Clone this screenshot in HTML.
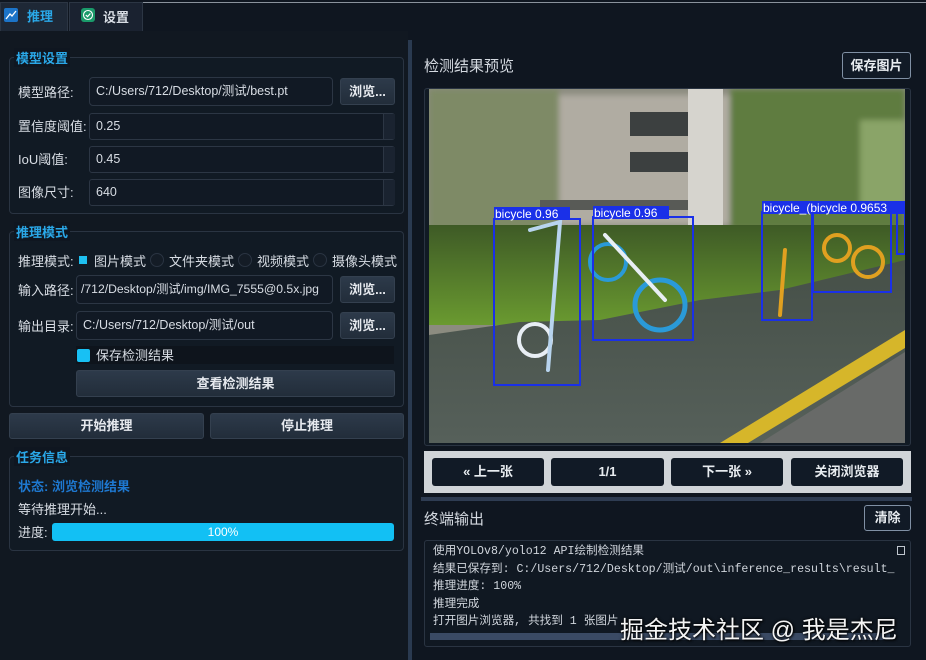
<!DOCTYPE html>
<html><head><meta charset="utf-8"><style>
*{box-sizing:border-box;margin:0;padding:0}
body{width:926px;height:660px;background:#0f1620;font-family:"Liberation Sans","Noto Sans CJK SC",sans-serif;color:#d8dde4;font-size:13px;position:relative;overflow:hidden}
.a{position:absolute}
.grp{position:absolute;border:1px solid #2a3442;border-radius:4px;background:#111a24}
.gt{position:absolute;color:#2aa8e8;font-weight:bold;font-size:13px;background:#0f1620;padding:0 2px}
.lbl{position:absolute;font-size:13px;color:#d8dde4;line-height:15px}
.inp{position:absolute;background:#111924;border:1px solid #2c3644;border-radius:3px;padding-left:6px;line-height:27px;font-size:12.5px;color:#d8dde4;white-space:nowrap;overflow:hidden}
.btn{position:absolute;background:linear-gradient(#2d3a4a,#222d3a);border:1px solid #34404f;border-radius:3px;text-align:center;font-weight:bold;color:#e6e9ee;font-size:13px}
.spin{position:absolute;width:12px;border-left:1px solid #2c3644}
.nb{position:absolute;top:458px;height:28px;background:#111a26;border-radius:3px;color:#e8ecf0;font-weight:bold;text-align:center;line-height:28px;font-size:13px}
.mono{font-family:"Liberation Mono","Noto Sans CJK SC",monospace;font-size:11.6px;line-height:17.5px;color:#d0d5dc}
</style></head><body>
<div class="a" style="left:0;top:0;width:926px;height:31px;background:#0f1620"></div>
<div class="a" style="left:142px;top:2px;width:784px;height:1px;background:#8a929c"></div>
<div class="a" style="left:0;top:2px;width:68px;height:29px;background:#1e2836;border:1px solid #2c3644;border-bottom:none"></div>
<div class="a" style="left:4px;top:8px;width:14px;height:14px;background:#1c74c8;border-radius:2px"></div>
<svg class="a" style="left:4px;top:8px" width="14" height="14"><path d="M2 11 L6 6 L8 8 L12 3" stroke="#fff" stroke-width="1.3" fill="none"/></svg>
<div class="lbl" style="left:27px;top:9px;color:#2aa8e8;font-weight:bold">推理</div>
<div class="a" style="left:69px;top:2px;width:74px;height:29px;background:#1a2230;border:1px solid #2c3644;border-bottom:none"></div>
<div class="a" style="left:81px;top:8px;width:14px;height:14px;background:#1a9a6a;border-radius:3px"></div>
<svg class="a" style="left:81px;top:8px" width="14" height="14"><circle cx="7" cy="7" r="4.5" stroke="#fff" stroke-width="1.1" fill="none"/><path d="M4.8 7 L6.5 8.6 L9.4 5.5" stroke="#fff" stroke-width="1.2" fill="none"/></svg>
<div class="lbl" style="left:103px;top:10px;font-weight:bold">设置</div>

<div class="a" style="left:0;top:31px;width:408px;height:629px;background:#111821"></div>
<div class="a" style="left:408px;top:40px;width:4px;height:620px;background:#2a3a50"></div>

<div class="grp" style="left:9px;top:57px;width:395px;height:157px"></div>
<div class="gt" style="left:14px;top:48px">模型设置</div>
<div class="lbl" style="left:18px;top:85px">模型路径:</div>
<div class="inp" style="left:89px;top:77px;width:244px;height:29px;border-radius:4px">C:/Users/712/Desktop/测试/best.pt</div>
<div class="btn" style="left:340px;top:78px;width:55px;height:27px;line-height:25px">浏览...</div>
<div class="lbl" style="left:18px;top:119px">置信度阈值:</div>
<div class="inp" style="left:89px;top:113px;width:306px;height:27px;line-height:25px">0.25</div>
<div class="spin" style="left:383px;top:114px;height:25px;background:#1a2330"></div>
<div class="lbl" style="left:18px;top:152px">IoU阈值:</div>
<div class="inp" style="left:89px;top:146px;width:306px;height:27px;line-height:25px">0.45</div>
<div class="spin" style="left:383px;top:147px;height:25px;background:#1a2330"></div>
<div class="lbl" style="left:18px;top:185px">图像尺寸:</div>
<div class="inp" style="left:89px;top:179px;width:306px;height:27px;line-height:25px">640</div>
<div class="spin" style="left:383px;top:180px;height:25px;background:#1a2330"></div>

<div class="grp" style="left:9px;top:231px;width:395px;height:176px"></div>
<div class="gt" style="left:14px;top:222px">推理模式</div>
<div class="lbl" style="left:18px;top:254px">推理模式:</div>
<div class="a" style="left:79px;top:256px;width:8px;height:8px;background:#1ec0f0"></div>
<div class="lbl" style="left:94px;top:254px">图片模式</div>
<div class="a" style="left:150px;top:253px;width:14px;height:14px;border-radius:50%;border:1px solid #2a3442;background:#141c26"></div>
<div class="lbl" style="left:169px;top:254px">文件夹模式</div>
<div class="a" style="left:238px;top:253px;width:14px;height:14px;border-radius:50%;border:1px solid #2a3442;background:#141c26"></div>
<div class="lbl" style="left:257px;top:254px">视频模式</div>
<div class="a" style="left:313px;top:253px;width:14px;height:14px;border-radius:50%;border:1px solid #2a3442;background:#141c26"></div>
<div class="lbl" style="left:332px;top:254px">摄像头模式</div>
<div class="lbl" style="left:18px;top:283px">输入路径:</div>
<div class="inp" style="left:76px;top:275px;width:257px;height:29px;border-radius:4px;padding-left:4px;font-size:12.2px">/712/Desktop/测试/img/IMG_7555@0.5x.jpg</div>
<div class="btn" style="left:340px;top:276px;width:55px;height:27px;line-height:25px">浏览...</div>
<div class="lbl" style="left:18px;top:319px">输出目录:</div>
<div class="inp" style="left:76px;top:311px;width:257px;height:29px;border-radius:4px">C:/Users/712/Desktop/测试/out</div>
<div class="btn" style="left:340px;top:312px;width:55px;height:27px;line-height:25px">浏览...</div>
<div class="a" style="left:76px;top:346px;width:318px;height:18px;background:#0e141c"></div>
<div class="a" style="left:77px;top:349px;width:13px;height:13px;background:#18c0f4;border-radius:2px"></div>
<div class="lbl" style="left:96px;top:348px">保存检测结果</div>
<div class="btn" style="left:76px;top:370px;width:319px;height:27px;line-height:25px">查看检测结果</div>

<div class="btn" style="left:9px;top:413px;width:195px;height:26px;line-height:24px">开始推理</div>
<div class="btn" style="left:210px;top:413px;width:194px;height:26px;line-height:24px">停止推理</div>

<div class="grp" style="left:9px;top:456px;width:395px;height:95px"></div>
<div class="gt" style="left:14px;top:447px">任务信息</div>
<div class="lbl" style="left:18px;top:479px;color:#1e78d0;font-weight:bold">状态: 浏览检测结果</div>
<div class="lbl" style="left:18px;top:502px">等待推理开始...</div>
<div class="lbl" style="left:18px;top:525px">进度:</div>
<div class="a" style="left:52px;top:523px;width:342px;height:18px;background:#12c0f4;border-radius:3px;text-align:center;color:#fff;font-size:12px;line-height:18px">100%</div>

<div class="lbl" style="left:424px;top:58px;font-size:15px;line-height:18px;color:#d4d9e0">检测结果预览</div>
<div class="a" style="left:842px;top:52px;width:69px;height:27px;border:1px solid #8090a4;border-radius:3px;background:#111a26;color:#e8ecf0;font-weight:bold;text-align:center;line-height:25px">保存图片</div>
<div class="a" style="left:424px;top:88px;width:487px;height:358px;border:1px solid #2a3442;border-radius:3px;background:#111a24"></div>
<svg class="a" style="left:429px;top:89px" width="476" height="354" viewBox="429 89 476 354">
<defs>
<linearGradient id="pave" x1="0" y1="0" x2="0" y2="1"><stop offset="0" stop-color="#465048"/><stop offset="1" stop-color="#56605a"/></linearGradient>
<linearGradient id="grass" x1="0" y1="0" x2="0" y2="1"><stop offset="0" stop-color="#3e5a26"/><stop offset="1" stop-color="#6a9a30"/></linearGradient>
<filter id="bl"><feGaussianBlur stdDeviation="3"/></filter>
</defs>
<rect x="429" y="89" width="476" height="354" fill="#8c8c80"/>
<g filter="url(#bl)">
<rect x="540" y="95" width="190" height="130" fill="#b0aca2"/>
<rect x="429" y="89" width="130" height="150" fill="#7e8a66"/>
<rect x="730" y="89" width="175" height="140" fill="#5e7c40"/>
<rect x="860" y="120" width="45" height="90" fill="#8aa468"/>
</g>
<rect x="630" y="112" width="62" height="24" fill="#3c4040"/>
<rect x="630" y="152" width="62" height="20" fill="#3c4040"/>
<rect x="540" y="200" width="180" height="10" fill="#585a56"/>
<rect x="688" y="89" width="35" height="145" fill="#d6d4ce"/>
<rect x="429" y="225" width="476" height="100" fill="url(#grass)"/>
<polygon points="429,335 520,322 600,320 700,300 780,290 905,260 905,443 429,443" fill="url(#pave)"/>
<polygon points="720,443 905,330 905,348 748,443" fill="#d6b62a"/>
<polygon points="760,443 905,352 905,443" fill="#686a68"/>
<g fill="none" stroke-linecap="round">
<circle cx="535" cy="340" r="16" stroke="#e8eef4" stroke-width="4"/>
<path d="M530 230 L560 222 L548 370" stroke="#b8d4ee" stroke-width="4"/>
<circle cx="608" cy="262" r="18" stroke="#2a9ad8" stroke-width="4"/>
<circle cx="660" cy="305" r="25" stroke="#2a9ad8" stroke-width="5"/>
<path d="M605 235 L665 300" stroke="#e8eef4" stroke-width="4"/>
<circle cx="837" cy="248" r="13" stroke="#e0a020" stroke-width="4"/>
<circle cx="868" cy="262" r="15" stroke="#e0a020" stroke-width="4"/>
<path d="M785 250 L780 315" stroke="#e0a020" stroke-width="4"/>
</g>
<g fill="none" stroke="#1a30e8" stroke-width="2">
<rect x="494" y="219" width="86" height="166"/>
<rect x="593" y="217" width="100" height="123"/>
<rect x="762" y="212" width="50" height="108"/>
<rect x="813" y="212" width="78" height="80"/>
<rect x="897" y="212" width="8" height="42"/>
</g>
<g fill="#1a30e8"><rect x="494" y="207" width="76" height="13"/><rect x="593" y="206" width="76" height="13"/><rect x="762" y="201" width="143" height="13"/></g>
<g fill="#fff" font-family="Liberation Sans,sans-serif" font-size="12"><text x="495" y="218">bicycle 0.96</text><text x="594" y="217">bicycle 0.96</text><text x="763" y="212">bicycle_(bicycle 0.9653</text></g>
</svg>
<div class="a" style="left:424px;top:451px;width:487px;height:42px;background:#d0d4d8"></div>
<div class="nb" style="left:432px;width:112px">« 上一张</div>
<div class="nb" style="left:551px;width:113px">1/1</div>
<div class="nb" style="left:671px;width:112px">下一张 »</div>
<div class="nb" style="left:791px;width:112px">关闭浏览器</div>
<div class="a" style="left:421px;top:497px;width:491px;height:4px;background:#2e3c52"></div>
<div class="lbl" style="left:424px;top:511px;font-size:15px;line-height:18px;color:#d4d9e0">终端输出</div>
<div class="a" style="left:864px;top:505px;width:47px;height:26px;border:1px solid #8090a4;border-radius:3px;background:#111a26;color:#e8ecf0;font-weight:bold;text-align:center;line-height:24px">清除</div>
<div class="a" style="left:424px;top:540px;width:487px;height:107px;border:1px solid #2a3442;border-radius:3px;background:#101822"></div>
<div class="a mono" style="left:433px;top:543px;width:462px;white-space:pre;overflow:hidden">使用YOLOv8/yolo12 API绘制检测结果
结果已保存到: C:/Users/712/Desktop/测试/out\inference_results\result_1
推理进度: 100%
推理完成
打开图片浏览器, 共找到 1 张图片</div>
<div class="a" style="left:897px;top:546px;width:8px;height:9px;border:1px solid #c0c6ce"></div>
<div class="a" style="left:430px;top:633px;width:460px;height:7px;background:#3a4a64"></div>
<div class="a" style="left:620px;top:610px;font-size:24px;color:#f4f4f4;text-shadow:0 0 3px #000,1px 1px 2px #000">掘金技术社区 @ 我是杰尼</div>
</body></html>
